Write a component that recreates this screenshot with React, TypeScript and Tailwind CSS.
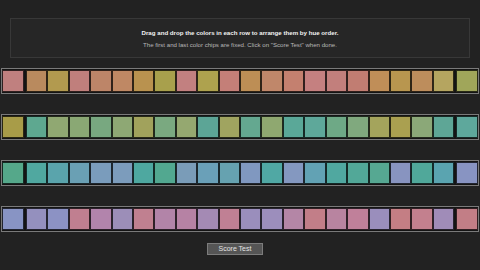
import React from 'react';

// chip colours per row, first and last are the fixed ends
const rows: string[][] = [
  [
    '#c0807f', '#b98a5e', '#b29a4f', '#c07f7c', '#bd8568', '#bf8864', '#b9924f', '#a8a04c',
    '#c28080', '#aea24e', '#c47f78', '#bd8e55', '#c0876a', '#c4806f', '#c58080', '#c27f7c',
    '#c17d72', '#c08e58', '#b8964f', '#bd8d5c', '#b5a560', '#a0a65a',
  ],
  [
    '#a89c48', '#5ea890', '#90a872', '#8aa874', '#78a880', '#8ea874', '#a1a25c', '#7aa980',
    '#95a870', '#5ca596', '#a0a460', '#64a890', '#8fa870', '#5aa898', '#5ea89a', '#6ea986',
    '#80a97e', '#a4a45c', '#aaa050', '#8ba878', '#5ea696', '#5ea89c',
  ],
  [
    '#55a88a', '#50a8a0', '#5aa4ac', '#6aa0b4', '#7a9cbc', '#7c9cbc', '#4ea8a0', '#52a890',
    '#7a9cb8', '#6aa0b8', '#66a2b0', '#8098c0', '#50a8a4', '#8498c0', '#62a2b4', '#50a8a0',
    '#52a898', '#56a892', '#8894c0', '#50a89a', '#5aa4b0', '#8894c2',
  ],
  [
    '#8894c4', '#9490be', '#8c92c4', '#c07f90', '#b284ac', '#9c8eb8', '#c08090', '#b284a8',
    '#b682a4', '#a48ab4', '#c08094', '#9a8ebc', '#9c8ebc', '#b486a6', '#c27e88', '#b884a0',
    '#c0809a', '#9a8ebc', '#c47e84', '#c3808e', '#a08cb8', '#c27e86',
  ],
];

function Chip({ color, fixed }: { color: string; fixed?: boolean }) {
  return (
    <div
      className={`h-[22px] border border-black/75 ${fixed ? 'w-[22px] shrink-0' : 'flex-1'}`}
      style={{ backgroundColor: color }}
    />
  );
}

function ChipRow({ colors }: { colors: string[] }) {
  const first = colors[0];
  const last = colors[colors.length - 1];
  const middle = colors.slice(1, -1);
  return (
    <div className="mx-px flex border border-[#7a7a7a] bg-[#141414] py-px">
      <Chip color={first} fixed />
      <div className="mx-[2px] flex flex-1">
        {middle.map((c, i) => (
          <Chip key={i} color={c} />
        ))}
      </div>
      <Chip color={last} fixed />
    </div>
  );
}

export default function App() {
  return (
    <div
      className="flex h-[270px] w-[480px] flex-col overflow-hidden bg-[#222222]"
      style={{ fontFamily: '"Liberation Sans", Arial, sans-serif' }}
    >
      <div className="mx-[10px] mt-[18px] flex h-[40px] flex-col items-center justify-center gap-[5px] border border-[#383838] bg-[#262626]">
        <p className="text-[6.15px] leading-[7px] font-bold text-[#f2f2f2]">
          Drag and drop the colors in each row to arrange them by hue order.
        </p>
        <p className="text-[6.1px] leading-[7px] text-[#b8b8b8]">
          The first and last color chips are fixed. Click on "Score Test" when done.
        </p>
      </div>

      <div className="mt-[10px] flex flex-col gap-[20px]">
        {rows.map((r, i) => (
          <ChipRow key={i} colors={r} />
        ))}
      </div>

      <div className="mt-[11px] flex justify-center pr-[10px]">
        <button className="h-[12px] w-[56px] border border-[#7c7c7c] bg-[#555555] text-[7px] leading-[10px] text-[#e4e4e4]">
          Score Test
        </button>
      </div>
    </div>
  );
}
